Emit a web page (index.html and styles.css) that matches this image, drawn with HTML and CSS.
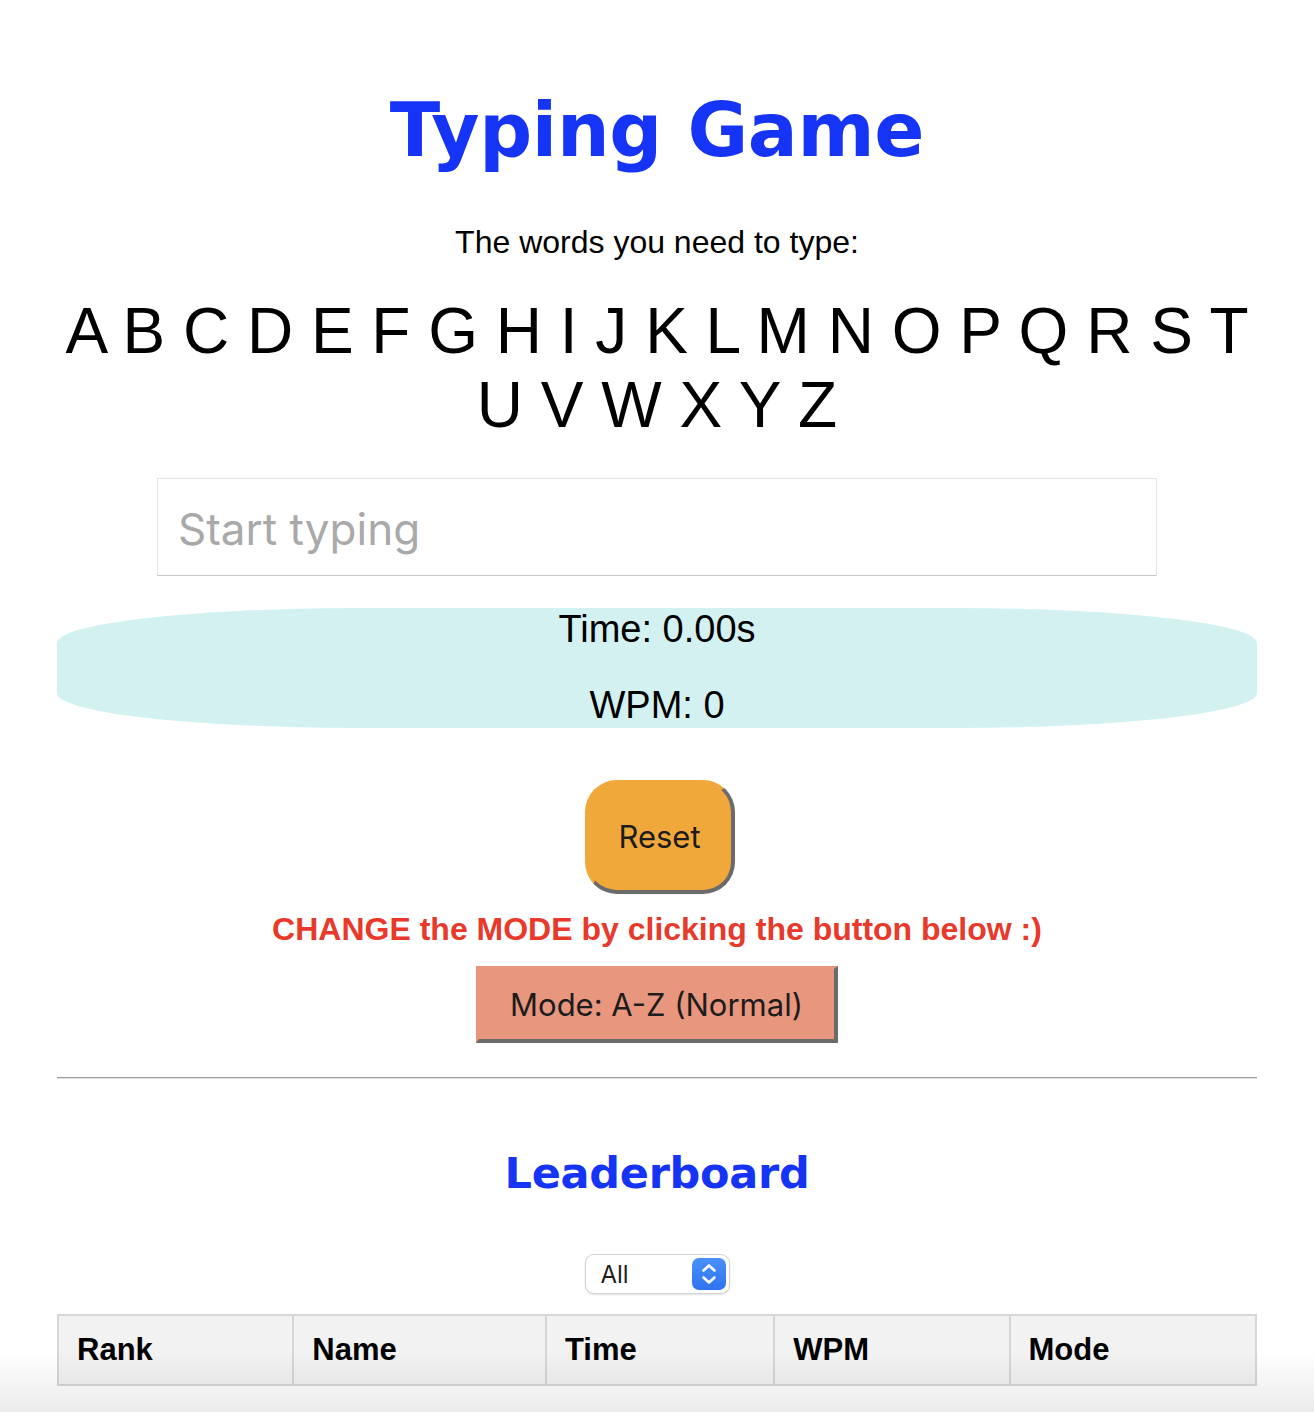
FILE: index.html
```html
<!DOCTYPE html>
<html lang="en">
<head>
<meta charset="utf-8">
<title>Typing Game</title>
<link rel="stylesheet" href="styles.css">
</head>
<body>
<div class="page">
  <h1 class="title">Typing Game</h1>
  <p class="prompt">The words you need to type:</p>
  <p class="words">A B C D E F G H I J K L M N O P Q R S T U V W X Y Z</p>
  <input class="typing" type="text" placeholder="Start typing">
  <div class="stats">
    <p class="stat">Time: 0.00s</p>
    <p class="stat">WPM: 0</p>
  </div>
  <button class="btn reset">Reset</button>
  <p class="hint">CHANGE the MODE by clicking the button below :)</p>
  <button class="btn mode">Mode: A-Z (Normal)</button>
  <hr class="divider">
  <h2 class="board-title">Leaderboard</h2>
  <div class="select">
    <span class="select-label">All</span>
    <span class="select-arrows">
      <svg width="34" height="32" viewBox="0 0 34 32">
        <path d="M11.5 12.5 L17 7.5 L22.5 12.5" fill="none" stroke="#fff" stroke-width="2.6" stroke-linecap="round" stroke-linejoin="round"/>
        <path d="M11.5 19.5 L17 24.5 L22.5 19.5" fill="none" stroke="#fff" stroke-width="2.6" stroke-linecap="round" stroke-linejoin="round"/>
      </svg>
    </span>
  </div>
  <table class="board">
    <thead>
      <tr>
        <th class="c-rank">Rank</th>
        <th class="c-name">Name</th>
        <th class="c-time">Time</th>
        <th class="c-wpm">WPM</th>
        <th class="c-mode">Mode</th>
      </tr>
    </thead>
  </table>
</div>
<div class="screen-shade"></div>
</body>
</html>
```

FILE: styles.css
```css
html, body {
  margin: 0;
  padding: 0;
  background: #fff;
}

body {
  font-family: "Liberation Sans", Arial, sans-serif;
  color: #000;
}

.page {
  width: 1200px;
  margin: 0 auto;
  padding-top: 87px;
  display: flex;
  flex-direction: column;
  align-items: center;
  text-align: center;
}

.title {
  margin: 0;
  font-family: "DejaVu Sans", sans-serif;
  font-weight: bold;
  font-size: 74px;
  line-height: 86px;
  color: #1634f6;
  letter-spacing: -0.3px;
}

.prompt {
  margin: 51px 0 0;
  font-size: 32px;
  line-height: 36px;
}

.words {
  margin: 34px 0 0;
  width: 100%;
  font-size: 64px;
  line-height: 74px;
}

.typing {
  display: block;
  margin-top: 36px;
  width: 1000px;
  height: 98px;
  box-sizing: border-box;
  border: 1px solid #e4e4e4;
  border-bottom-color: #c6c6c6;
  padding: 3px 20px 0;
  font-family: "Inter", "Noto Sans", sans-serif;
  font-size: 44px;
  color: #222;
  background: #fff;
  outline: none;
}

.typing::placeholder {
  color: #a9a9a9;
}

.stats {
  margin-top: 32px;
  width: 1200px;
  height: 120px;
  border-radius: 300px / 35px;
  background: #d4f1f1;
  display: flex;
  flex-direction: column;
  align-items: center;
  gap: 33px;
}

.stat {
  margin: 0;
  font-size: 38px;
  line-height: 43px;
}

.btn {
  font-family: "Inter", "Noto Sans", sans-serif;
  color: #1c1c1c;
  border-style: solid;
  border-width: 3px 4px 4px 3px;
  box-sizing: border-box;
  padding: 0;
  cursor: pointer;
}

.reset {
  margin: 52px 0 0 6px;
  width: 150px;
  height: 114px;
  border-radius: 32px;
  font-size: 31px;
  background: #f1a83b;
  border-color: #f1a83b #6b6b6b #6b6b6b #f1a83b;
}

.hint {
  margin: 17px 0 0;
  font-weight: bold;
  font-size: 32px;
  line-height: 37px;
  color: #e8392b;
}

.mode {
  margin-top: 18px;
  width: 362px;
  height: 77px;
  font-size: 31px;
  background: #e8967e;
  border-color: #e8967e #6b6b6b #6b6b6b #e8967e;
}

.divider {
  margin: 34px 0 0;
  width: 1200px;
  height: 0;
  border: 0;
  border-top: 1px solid #9c9c9c;
  border-bottom: 1px solid #e2e2e2;
}

.board-title {
  margin: 69px 0 0;
  font-family: "DejaVu Sans", sans-serif;
  font-weight: bold;
  font-size: 43px;
  line-height: 50px;
  color: #1634f6;
  letter-spacing: -0.3px;
}

.select {
  margin-top: 56px;
  width: 145px;
  height: 40px;
  box-sizing: border-box;
  border: 1px solid #d4d4d4;
  border-radius: 9px;
  box-shadow: 0 1px 2px rgba(0, 0, 0, 0.12);
  background: #fff;
  display: flex;
  align-items: center;
  justify-content: space-between;
  padding: 0 3px 0 15px;
}

.select-label {
  font-family: "Inter", "Noto Sans", sans-serif;
  font-size: 24px;
  color: #1f1f1f;
}

.select-arrows {
  display: flex;
  width: 34px;
  height: 32px;
  border-radius: 7px;
  background: linear-gradient(#4a90f8, #2f74f0);
}

.board {
  margin-top: 20px;
  width: 1200px;
  border-collapse: collapse;
  border: 2px solid #d6d6d6;
}

.board th {
  background: #f2f2f2;
  border: 2px solid #d6d6d6;
  padding: 17px 18px;
  text-align: left;
  font-size: 31px;
  line-height: 34px;
  font-weight: bold;
}

.c-rank { width: 235px; }
.c-name { width: 255px; }
.c-time { width: 227px; }
.c-wpm { width: 235px; }
.c-mode { width: 248px; }

.screen-shade {
  position: fixed;
  left: 0;
  right: 0;
  bottom: 0;
  height: 60px;
  pointer-events: none;
  background: linear-gradient(rgba(0, 0, 0, 0), rgba(0, 0, 0, 0.08));
}
```
